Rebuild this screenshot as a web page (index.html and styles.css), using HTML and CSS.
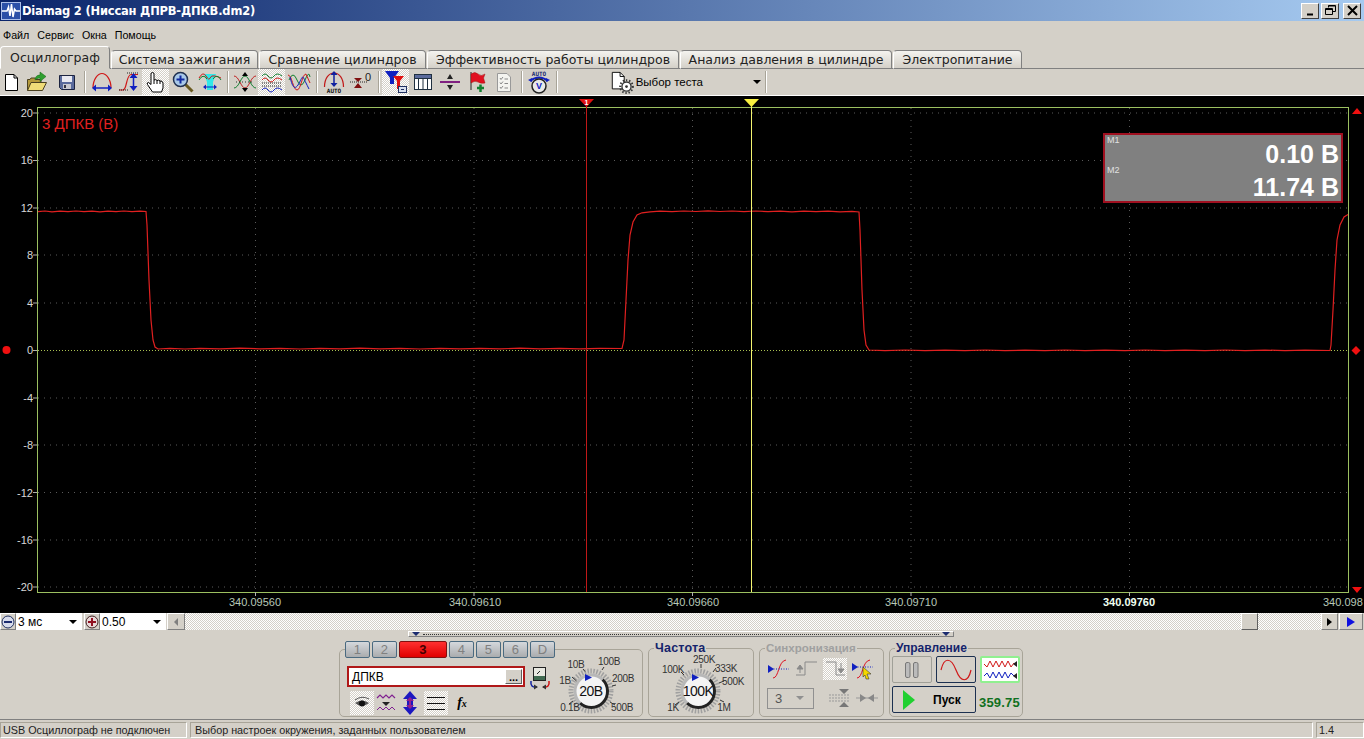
FILE: index.html
```html
<!DOCTYPE html>
<html>
    <head>
        <meta charset="UTF-8">
        <title>Diamag 2</title>
        <link rel="stylesheet" href="styles.css">
    </head>
    <body>
        <div class="titlebar">
            <svg class="app-icon" width="20" height="18" viewBox="0 0 20 18"><rect x="0.500" y="0.500" width="19" height="17" fill="#2b50a8" stroke="#a9bde8"/><path d="M1 9H6L7.500 5L9 14L10.500 2L12 15L13.500 7L15 9H19" stroke="#fff" stroke-width="1.500" fill="none"/></svg>
            <span class="title-text">Diamag 2 (Ниссан ДПРВ-ДПКВ.dm2)</span>
            <div class="win-buttons">
                <button class="win-btn"><svg width="11" height="11" viewBox="0 0 11 11"><path d="M2 9.500H8" stroke="#000" stroke-width="2"/></svg></button>
                <button class="win-btn"><svg width="11" height="11" viewBox="0 0 11 11"><path d="M3.500 2.500V0.500H10.500V6.500H8M0.500 3.500H7.500V9.500H0.500Z M3.500 1H10" stroke="#000" fill="none"/><path d="M1 4.500H7" stroke="#000"/></svg></button>
                <button class="win-btn close"><svg width="11" height="11" viewBox="0 0 11 11"><path d="M1 1L10 10M10 1L1 10" stroke="#000" stroke-width="2"/></svg></button>
            </div>
        </div>

        <div class="menubar">
            <span>Файл</span><span>Сервис</span><span>Окна</span><span>Помощь</span>
        </div>

        <div class="tabs">
            <div class="tab active">Осциллограф</div>
            <div class="tab tab-w1">Система зажигания</div>
            <div class="tab tab-w2">Сравнение цилиндров</div>
            <div class="tab tab-w3">Эффективность работы цилиндров</div>
            <div class="tab tab-w4">Анализ давления в цилиндре</div>
            <div class="tab tab-w5">Электропитание</div>
        </div>

        <div class="toolbar">
            <div class="tool"><svg width="24" height="22" viewBox="0 0 24 22"><path d="M6.500 3.500H15L18.500 7V19.500H6.500Z" fill="#fff" stroke="#000"/><path d="M15 3.500V7H18.500" fill="none" stroke="#000"/></svg></div>
            <div class="tool"><svg width="24" height="22" viewBox="0 0 24 22"><path d="M1.500 19.500V8.500H4L5 7H9L10 8.500H15V11" fill="#b59a3c" stroke="#4a4020"/><path d="M1.500 19.500L5 11.500H20.500L16.500 19.500Z" fill="#f0dc78" stroke="#4a4020"/><path d="M9 9C9 6 11 4 14 4V1L20 5.500L14 10.500V7C12 7 10 8 9 9Z" fill="#2fa030" stroke="#106010" stroke-width="0.500"/></svg></div>
            <div class="tool tool-save"><svg width="24" height="22" viewBox="0 0 24 22"><path d="M4.500 4.500H19.500V18.500H6.500L4.500 16.500Z" fill="#5a6a9c" stroke="#1c2340"/><rect x="7" y="5" width="10" height="6" fill="#e8e8f0"/><rect x="8" y="13" width="8" height="5" fill="#c8c8d0"/><rect x="9" y="14" width="2" height="3" fill="#334"/></svg></div>
            <div class="sep"></div>
            <div class="tool"><svg width="24" height="22" viewBox="0 0 24 22"><path d="M3 17C3 8 8 2.500 12 2.500S21 8 21 17" fill="none" stroke="#d01818" stroke-width="1.200"/><path d="M4 17H20" stroke="#1020c0" stroke-width="1.500"/><path d="M2 17L6 13.500V20.500ZM22 17L18 13.500V20.500Z" fill="#1020c0"/></svg></div>
            <div class="tool"><svg width="24" height="22" viewBox="0 0 24 22"><path d="M2 19H6C10 19 9 4 14 3.500H21" fill="none" stroke="#d01818" stroke-width="1.200"/><path d="M2 19H12M10 2H22" stroke="#222" stroke-dasharray="1 1"/><path d="M16.500 6V16" stroke="#1020c0" stroke-width="1.500"/><path d="M16.500 2L20.500 7H12.500ZM16.500 20L20.500 15H12.500Z" fill="#1020c0"/></svg></div>
            <div class="tool on"><svg width="24" height="24" viewBox="0 0 24 24"><path d="M8.500 22L3.500 14.500Q2.500 12.500 4.500 12.500L7 14.500V4Q7 2.500 8.500 2.500T10 4V10Q12 9 13 10.500Q15 9.500 16 11Q18.500 10.500 19 13V18L17.500 22Z" fill="#fff" stroke="#000"/><path d="M10 10V14M13 10.500V14M16 11V14" stroke="#000"/></svg></div>
            <div class="tool"><svg width="24" height="24" viewBox="0 0 24 24"><path d="M14 14L21.500 21.500" stroke="#6a5a20" stroke-width="3"/><circle cx="9.500" cy="9.500" r="7" fill="#a8c8e8" stroke="#203050" stroke-width="1.500"/><path d="M5.500 9.500H13.500M9.500 5.500V13.500" stroke="#1028a0" stroke-width="2"/></svg></div>
            <div class="tool"><svg width="24" height="24" viewBox="0 0 24 24"><path d="M6 4H18L15 12V20H9V12Z" fill="#30e8e8"/><path d="M1 8Q5 1 8 6T12 8T17 6T23 8" fill="none" stroke="#d01818"/><path d="M1 10Q5 3 9 9M15 9Q19 3 23 10" fill="none" stroke="#108030"/><path d="M6 17H18" stroke="#1020c0"/><path d="M5 17L8 14.500V19.500ZM19 17L16 14.500V19.500Z" fill="#1020c0"/></svg></div>
            <div class="sep"></div>
            <div class="tool"><svg width="24" height="22" viewBox="0 0 24 22"><path d="M1 5C6 5 8 17 12 17S18 5 23 5" fill="none" stroke="#c02020"/><path d="M1 17C6 17 8 5 12 5S18 17 23 17" fill="none" stroke="#108030"/><path d="M12 1L15 5H9ZM12 21L15 17H9Z" fill="#000"/><path d="M3 11H21" stroke="#333" stroke-dasharray="1 2"/></svg></div>
            <div class="tool on"><svg width="24" height="22" viewBox="0 0 24 22"><path d="M2 5Q5 1 8 5T14 5T22 5" fill="none" stroke="#108030"/><path d="M2 9Q5 5 8 9T14 9T22 9" fill="none" stroke="#d01818"/><path d="M2 12H22" stroke="#222" stroke-dasharray="1 1"/><path d="M2 15H22" stroke="#222" stroke-dasharray="1 1"/><path d="M2 19Q5 15 8 19T14 19T22 19" fill="none" stroke="#1020c0"/></svg></div>
            <div class="tool"><svg width="24" height="22" viewBox="0 0 24 22"><path d="M2 9Q6 -1 10 9T18 9T23 6" fill="none" stroke="#108030"/><path d="M1 4C5 4 6 19 10 19S15 3 19 3T23 12" fill="none" stroke="#d01818"/><path d="M3 6C5 14 7 20 11 14S15 2 18 10T22 18" fill="none" stroke="#1020c0"/></svg></div>
            <div class="sep"></div>
            <div class="tool"><svg width="24" height="24" viewBox="0 0 24 24"><path d="M2.500 17C2.500 8 7 3 12 3S21.500 8 21.500 17" fill="none" stroke="#c01818" stroke-width="1.200"/><path d="M12 4V14" stroke="#1020a0" stroke-width="1.500"/><path d="M12 1L15.500 5H8.500ZM12 17L15.500 13H8.500Z" fill="#1020a0"/><text class="tiny-bold" x="12" y="23">AUTO</text></svg></div>
            <div class="tool"><svg width="24" height="22" viewBox="0 0 24 22"><path d="M1 11H18" stroke="#222" stroke-dasharray="1 1"/><path d="M9 11L5 7H13ZM9 12L5 17H13Z" fill="#801010"/><text class="icon-zero" x="19" y="10">0</text></svg></div>
            <div class="sep"></div>
            <div class="tool on"><svg width="24" height="24" viewBox="0 0 24 24"><path d="M1 1H15L10 8V14H6V8Z" fill="#1020c0"/><path d="M9 6H20L16 11V19H13V11Z" fill="#e01010"/><rect x="14.500" y="16.500" width="8" height="6" fill="#d8e0f0" stroke="#203060"/><path d="M17 19.500H20" stroke="#203060"/></svg></div>
            <div class="tool"><svg width="24" height="22" viewBox="0 0 24 22"><rect x="3.500" y="3.500" width="17" height="15" fill="#fff" stroke="#203040"/><rect x="3.500" y="3.500" width="17" height="4" fill="#5a6a9c" stroke="#203040"/><path d="M7.500 7V18M12 7V18M16.500 7V18" stroke="#203040"/></svg></div>
            <div class="tool"><svg width="24" height="22" viewBox="0 0 24 22"><path d="M2 11H22" stroke="#802080" stroke-width="2"/><path d="M12 3L15 8H9ZM12 19L15 14H9Z" fill="#222"/></svg></div>
            <div class="tool"><svg width="24" height="24" viewBox="0 0 24 24"><path d="M6 2V20" stroke="#222"/><path d="M6 4Q10 1 13 4T20 4L18.500 8L20 13Q16 14 13 12T6 13Z" fill="#e01020" stroke="#a01010" stroke-width="0.500"/><path d="M15.500 14.500V22M12 18H19" stroke="#108030" stroke-width="2.500"/></svg></div>
            <div class="tool"><svg width="24" height="22" viewBox="0 0 24 22"><path d="M5.500 2.500H15L18.500 6V20.500H5.500Z" fill="#f4f4f0" stroke="#999"/><path d="M8 7L9 8.500L11 6M8 11.500L9 13L11 10.500M8 16L9 17.500L11 15M12.500 8H16M12.500 12.500H16M12.500 17H16" stroke="#888" fill="none"/></svg></div>
            <div class="sep"></div>
            <div class="tool"><svg width="24" height="24" viewBox="0 0 24 24"><text class="tiny-bold navy" x="12" y="6">AUTO</text><path d="M3 11Q12 4 21 11" fill="none" stroke="#1020c0" stroke-width="2"/><path d="M1 10L5 8V12ZM23 10L19 8V12Z" fill="#1020c0"/><circle cx="12" cy="16" r="7" fill="#e8e8e8" stroke="#222" stroke-width="1.500"/><text class="icon-v" x="12" y="19">V</text></svg></div>
            <div class="sep"></div>
            <div class="test-select">
                <svg width="28" height="26" viewBox="0 0 28 26"><path d="M2.500 2.500H11L15.500 7V20.500H2.500Z" fill="#fff" stroke="#000"/><path d="M11 2.500V7H15.500" fill="none" stroke="#000"/><circle cx="18" cy="18" r="5" fill="#fff" stroke="#333" stroke-width="1.500"/><circle cx="18" cy="18" r="7" fill="none" stroke="#333" stroke-width="2" stroke-dasharray="1.500 2"/><circle cx="18" cy="18" r="1.500" fill="#333"/></svg>
                <span class="test-label">Выбор теста</span>
                <i class="arrow-down"></i>
            </div>
            <div class="sep"></div>
        </div>

        <div class="scope">
            <svg class="scope-svg" width="1364" height="517" viewBox="0 96 1364 517">
                <g class="grid">
                    <path d="M38 113H1348M38 160.500H1348M38 208H1348M38 255H1348M38 303H1348M38 398H1348M38 445H1348M38 492.500H1348M38 540H1348M38 587H1348"/>
                    <path d="M255.500 108V592M474 108V592M692.500 108V592M911 108V592M1129.500 108V592"/>
                </g>
                <path class="zero-line" d="M38 350.500H1348"/>
                <rect class="plot-frame" x="37.500" y="107.500" width="1311" height="485"/>
                <path class="ticks" d="M33 113H37M33 160.500H37M33 208H37M33 255H37M33 303H37M33 350.500H37M33 398H37M33 445H37M33 492.500H37M33 540H37M33 587H37M255.500 592V596M474 592V596M692.500 592V596M911 592V596M1129.500 592V596"/>
                <g class="y-labels">
                    <text x="33" y="117">20</text>
                    <text x="33" y="164">16</text>
                    <text x="33" y="212">12</text>
                    <text x="33" y="259">8</text>
                    <text x="33" y="307">4</text>
                    <text x="33" y="354">0</text>
                    <text x="33" y="402">-4</text>
                    <text x="33" y="449">-8</text>
                    <text x="33" y="497">-12</text>
                    <text x="33" y="544">-16</text>
                    <text x="33" y="591">-20</text>
                </g>
                <g class="x-labels">
                    <text x="255" y="606">340.09560</text>
                    <text x="475" y="606">340.09610</text>
                    <text x="693" y="606">340.09660</text>
                    <text x="911" y="606">340.09710</text>
                    <text class="bright" x="1129" y="606">340.09760</text>
                    <text class="clip-right" x="1323" y="606">340.098</text>
                </g>
                <text class="channel-name" x="42" y="129">3 ДПКВ (В)</text>
                <path class="trace" d="M38 211.600L45 211L52 211.800L60 211.200L68 211.700L76 211L84 211.600L92 211.200L100 211.800L108 211.200L116 211.600L124 211L132 211.700L140 211.200L146 211.500L147 225L149 280L151 320L153 340L155 347L158 349L170 348.400L185 349L200 348.300L220 348.900L240 348.200L260 348.800L280 348.300L300 349L320 348.400L340 348.900L360 348.200L380 348.800L400 348.300L420 349L440 348.400L460 348.900L480 348.300L500 348.800L520 348.200L540 348.900L560 348.400L580 348.800L600 348.300L622 348.500L624 340L626 300L628 260L630 235L633 222L637 215L642 212.800L650 211.800L660 211.200L672 211.700L684 211L696 211.500L708 210.900L720 211.500L732 211L744 211.600L756 211L768 211.600L780 211.200L792 211.800L804 211.200L816 211.700L828 211.200L840 211.800L852 211.300L859 212L860 230L862 290L864 330L866 345L869 350L885 350.600L905 350L925 350.700L945 350.100L965 350.600L985 350L1005 350.700L1025 350.100L1045 350.600L1065 350L1085 350.700L1105 350.100L1125 350.600L1145 350L1165 350.700L1185 350.100L1205 350.600L1225 350L1245 350.700L1265 350.100L1285 350.600L1305 350.100L1330 350.500L1331 345L1333 310L1335 270L1337 240L1340 225L1344 217L1348 214.500"/>
                <path class="cursor-red" d="M586.500 104V592"/>
                <path class="cursor-yellow" d="M751.500 104V592"/>
                <path d="M579 99H594L586.500 107Z" fill="#e01010"/>
                <path d="M744 99H759L751.500 107Z" fill="#f8f040"/>
                <text class="cursor-num" x="586.500" y="105">1</text>
                <circle cx="6.500" cy="350" r="4" fill="#f01010"/>
                <path d="M1356 346L1360.500 350.500L1356 355L1351.500 350.500Z" fill="#f01010"/>
                <path d="M1352 114L1357 108L1362 114ZM1352 587L1357 593L1362 587Z" fill="#f01010"/>
            </svg>
            <div class="readout">
                <div class="readout-row"><span class="readout-tag">M1</span><span class="readout-value">0.10 В</span></div>
                <div class="readout-row"><span class="readout-tag second">M2</span><span class="readout-value">11.74 В</span></div>
            </div>
        </div>

        <div class="scrollrow">
            <button class="round-btn"><svg width="14" height="14" viewBox="0 0 14 14"><circle cx="7" cy="7" r="6" fill="#d8dcec" stroke="#203060"/><path d="M3 7H11" stroke="#1c2c70" stroke-width="2"/></svg></button>
            <div class="combo combo-first"><span>3 мс</span><i class="arrow-down"></i></div>
            <button class="round-btn"><svg width="14" height="14" viewBox="0 0 14 14"><circle cx="7" cy="7" r="6" fill="#e8d8d8" stroke="#402020"/><path d="M3 7H11M7 3V11" stroke="#901020" stroke-width="2"/></svg></button>
            <div class="combo"><span>0.50</span><i class="arrow-down"></i></div>
            <button class="scroll-btn"><i class="arrow-left"></i></button>
            <div class="scroll-track"><div class="scroll-thumb"></div></div>
            <button class="scroll-btn end"><i class="arrow-right"></i></button>
            <button class="scroll-btn wide"><i class="arrow-right blue"></i></button>
        </div>

        <div class="panel">
            <div class="range-slider"><i class="arrow-down navy"></i><span class="range-dots"></span><i class="arrow-down navy"></i></div>
            <div class="groups">
                <fieldset class="group group-channel">
                    <legend class="channel-tabs">
                        <span class="ch">1</span><span class="ch">2</span><span class="ch ch-on">3</span><span class="ch">4</span><span class="ch">5</span><span class="ch">6</span><span class="ch">D</span>
                    </legend>
                    <div class="channel-left">
                        <div class="channel-input-row">
                            <div class="channel-input"><span>ДПКВ</span><button class="dots-btn">...</button></div>
                            <svg width="22" height="24" viewBox="0 0 22 24"><rect x="4.500" y="1.500" width="12" height="13" fill="#e8e8e0" stroke="#222"/><rect x="5" y="10" width="11" height="4" fill="#406a50"/><path d="M8 8L11 5" stroke="#222"/><path d="M2 15Q1 22 8 21" fill="none" stroke="#1020a0" stroke-width="1.500"/><path d="M20 15Q21 22 14 21" fill="none" stroke="#d01010" stroke-width="1.500"/><path d="M9 21L5 18.500V23.500ZM13 21L17 18.500V23.500Z" fill="#333"/></svg>
                        </div>
                        <div class="channel-tools">
                            <div class="mini on"><svg width="20" height="14" viewBox="0 0 20 14"><path d="M3 4Q10 -1 17 3" fill="none" stroke="#555"/><path d="M3 7Q10 2 17 7Q10 13 3 7Z" fill="#555"/><circle cx="10" cy="7.500" r="3" fill="#111"/></svg></div>
                            <div class="mini"><svg width="20" height="22" viewBox="0 0 20 22"><path d="M1 6L4 3L7 6L10 3L13 6L16 3L19 6" fill="none" stroke="#802090" stroke-width="1.200"/><path d="M1 18L4 15L7 18L10 15L13 18L16 15L19 18" fill="none" stroke="#802090"/><path d="M6 10H14L10 14Z" fill="#222"/></svg></div>
                            <div class="mini"><svg width="20" height="24" viewBox="0 0 20 24"><path d="M10 0L17 8H13V16H17L10 24L3 16H7V8H3Z" fill="#1c18c0"/><path d="M10 6L14 10H11V14H14L10 18L6 14H9V10H6Z" fill="#902090"/></svg></div>
                            <div class="mini on lines"><svg width="18" height="16" viewBox="0 0 18 16"><path d="M0 2.500H18M0 8.500H18M0 14.500H18" stroke="#111"/></svg></div>
                            <div class="mini fx">f<sub>x</sub></div>
                        </div>
                    </div>
                    <svg class="knob" width="82" height="61" viewBox="560 655 82 61">
                        <circle class="knob-teeth" cx="593" cy="691" r="20"/>
                        <circle cx="593" cy="691" r="16" fill="#f4f4f4"/>
                        <path class="knob-dark" d="M604.500 679.500A16 16 0 0 1 582 703"/>
                        <path class="knob-light" d="M582 703A16 16 0 0 1 604.500 679.500"/>
                        <path class="knob-mark" d="M578.500 681L574 677M587 671.500L585 669M604 670L606 667M614 686L618 685M612 702L617 705M575 701L571 704"/>
                        <path d="M587 674L594 677.500L587 681Z" fill="#1020c0"/>
                        <text class="knob-label" x="578" y="668">10В</text>
                        <text class="knob-label" x="611" y="665">100В</text>
                        <text class="knob-label" x="567" y="684">1В</text>
                        <text class="knob-label" x="625" y="682">200В</text>
                        <text class="knob-label" x="572" y="711">0.1В</text>
                        <text class="knob-label" x="624" y="711">500В</text>
                        <text class="knob-value" x="593" y="696">20В</text>
                    </svg>
                </fieldset>

                <fieldset class="group group-freq">
                    <legend>Частота</legend>
                    <svg class="knob" width="104" height="61" viewBox="649 655 104 61">
                        <circle class="knob-teeth" cx="698" cy="691" r="20"/>
                        <circle cx="698" cy="691" r="16" fill="#f4f4f4"/>
                        <path class="knob-dark" d="M709.500 679.500A16 16 0 0 1 687 703"/>
                        <path class="knob-light" d="M687 703A16 16 0 0 1 709.500 679.500"/>
                        <path class="knob-mark" d="M684 675L681 672M701 668V664M713 672L716 668M719 683L724 681M720 700L724 702M679 702L675 705"/>
                        <path d="M692 674L699 677.500L692 681Z" fill="#1020c0"/>
                        <text class="knob-label" x="673" y="673">100K</text>
                        <text class="knob-label" x="704" y="663">250K</text>
                        <text class="knob-label" x="726" y="672">333K</text>
                        <text class="knob-label" x="733" y="685">500K</text>
                        <text class="knob-label" x="673" y="711">1K</text>
                        <text class="knob-label" x="724" y="711">1M</text>
                        <text class="knob-value" x="698" y="696">100K</text>
                    </svg>
                </fieldset>

                <fieldset class="group group-sync">
                    <legend>Синхронизация</legend>
                    <div class="sync-row">
                        <div class="sync-icon"><svg width="24" height="22" viewBox="0 0 24 22"><path d="M6 20C12 20 11 3 19 2" fill="none" stroke="#e01020"/><path d="M4 11H22" stroke="#1020c0" stroke-dasharray="1 1.500"/><path d="M1 7L7 11L1 15Z" fill="#1020c0"/></svg></div>
                        <div class="sync-icon"><svg width="24" height="22" viewBox="0 0 24 22"><path d="M1 17H10V4H22" fill="none" stroke="#8a8a8a"/><path d="M5 7L8 11H2ZM5 10V15" stroke="#8a8a8a" fill="#8a8a8a"/></svg></div>
                        <div class="sync-icon on"><svg width="24" height="22" viewBox="0 0 24 22"><path d="M3 4H13V17H22" fill="none" stroke="#8a8a8a"/><path d="M18 15L15 11H21ZM18 5V12" stroke="#8a8a8a" fill="#8a8a8a"/></svg></div>
                        <div class="sync-icon"><svg width="24" height="22" viewBox="0 0 24 22"><path d="M6 20C12 20 11 3 19 2" fill="none" stroke="#e01020"/><path d="M4 9H22" stroke="#1020c0" stroke-dasharray="1 1.500"/><path d="M1 5L7 9L1 13Z" fill="#1020c0"/><path d="M12 9L20 16L16 16L18 21L15 21L14 17L12 19Z" fill="#f4d800" stroke="#222" stroke-width="0.500"/></svg></div>
                    </div>
                    <div class="sync-row second">
                        <div class="sync-combo"><span>3</span><i class="arrow-down gray"></i></div>
                        <div class="sync-icon"><svg width="24" height="20" viewBox="0 0 24 20"><path d="M2 7H22M2 10H22M2 13H22" stroke="#999" stroke-dasharray="2 1"/><path d="M17 6L12 1H22ZM17 14L12 19H22Z" fill="#777"/></svg></div>
                        <div class="sync-icon"><svg width="24" height="20" viewBox="0 0 24 20"><path d="M1 10H23" stroke="#999"/><path d="M11 10L5 6V14ZM13 10L19 6V14Z" fill="#888"/></svg></div>
                    </div>
                </fieldset>

                <fieldset class="group group-ctrl">
                    <legend>Управление</legend>
                    <div class="ctrl-grid">
                        <button class="ctrl-btn"><svg width="16" height="20" viewBox="0 0 16 20"><rect x="1.500" y="2.500" width="4.500" height="15" rx="1.500" fill="#bbb" stroke="#777"/><rect x="9.500" y="2.500" width="4.500" height="15" rx="1.500" fill="#bbb" stroke="#777"/></svg></button>
                        <button class="ctrl-btn dark"><svg width="32" height="22" viewBox="0 0 32 22"><path d="M1 11C4 -2 11 -2 16 11S28 24 31 11" fill="none" stroke="#d01818" stroke-width="1.200"/></svg></button>
                        <button class="ctrl-btn green"><svg width="34" height="24" viewBox="0 0 34 24"><path d="M1 6L4 9L7 3L10 9L13 3L16 9L19 3L22 9L25 3L28 9L31 5" fill="none" stroke="#d01818"/><path d="M1 18L4 15L7 20L10 14L13 20L16 14L19 20L22 14L25 20L28 15L31 18" fill="none" stroke="#1020c0"/><path d="M34 3V9L30 6ZM34 15V21L30 18Z" fill="#222"/></svg></button>
                        <button class="ctrl-btn dark start"><svg width="14" height="22" viewBox="0 0 14 22"><path d="M1 1L13 11L1 21Z" fill="#20d030"/></svg><span>Пуск</span></button>
                        <div class="speed">359.75</div>
                    </div>
                </fieldset>
            </div>
        </div>

        <div class="statusbar">
            <div class="status status-a">USB Осциллограф не подключен</div>
            <div class="status status-b">Выбор настроек окружения, заданных пользователем</div>
            <div class="status status-c">1.4</div>
        </div>
    </body>
</html>
```

FILE: styles.css
```css
* {
    box-sizing: border-box;
}
html, body {
    margin: 0;
    padding: 0;
}
body {
    width: 1364px;
    height: 739px;
    overflow: hidden;
    display: flex;
    flex-direction: column;
    background: #d4d0c8;
    font-family: "Liberation Sans", Arial, sans-serif;
    font-size: 11px;
    color: #000;
}
button {
    padding: 0;
    margin: 0;
    font-family: inherit;
}

/* title bar */
.titlebar {
    height: 21px;
    display: flex;
    align-items: center;
    padding: 0 3px 0 1px;
    background: linear-gradient(to right, #0a246a, #a6caf0);
}
.app-icon {
    flex: none;
}
.title-text {
    margin-left: 1px;
    color: #fff;
    font-family: "DejaVu Sans", sans-serif;
    font-size: 11.500px;
    font-weight: bold;
    letter-spacing: -0.200px;
}
.win-buttons {
    margin-left: auto;
    display: flex;
    gap: 2px;
}
.win-btn {
    width: 18px;
    height: 16px;
    display: flex;
    align-items: center;
    justify-content: center;
    background: #d4d0c8;
    border: 1px solid;
    border-color: #fff #404040 #404040 #fff;
}
.win-btn.close {
    margin-left: 2px;
}

/* menu */
.menubar {
    height: 25px;
    display: flex;
    align-items: center;
    gap: 8px;
    padding: 3px 0 0 3px;
    font-family: "Liberation Sans", sans-serif;
    font-size: 10.700px;
}

/* tabs */
.tabs {
    height: 23px;
    display: flex;
    align-items: flex-end;
    gap: 1px;
    border-bottom: 1px solid #808080;
    font-family: "DejaVu Sans", sans-serif;
    font-size: 12.500px;
}
.tab {
    height: 19px;
    margin-bottom: -1px;
    display: flex;
    align-items: center;
    justify-content: center;
    border: 1px solid #808080;
    border-bottom: 1px solid #808080;
    border-left-color: #fff;
    border-radius: 4px 4px 0 0;
    background: linear-gradient(#f4f3ef, #d4d0c8);
    color: #222;
}
.tab.active {
    width: 110px;
    height: 23px;
    background: #d4d0c8;
    border-bottom-color: #d4d0c8;
    border-top-color: #fff;
}
.tab-w1 { width: 147px; }
.tab-w2 { width: 167px; }
.tab-w3 { width: 252px; }
.tab-w4 { width: 212px; }
.tab-w5 { width: 129px; }

/* toolbar */
.toolbar {
    height: 27px;
    display: flex;
    align-items: stretch;
    margin-left: -3px;
    border-bottom: 1px solid #fff;
}
.tool {
    width: 27px;
    display: flex;
    align-items: center;
    justify-content: center;
    flex: none;
}
.tool-save {
    margin-left: 2px;
}
.on {
    background: repeating-conic-gradient(#fff 0 25%, #d4d0c8 0 50%) 0 0 / 2px 2px;
}
.sep {
    width: 8px;
    flex: none;
    margin: 2px 0;
    background: linear-gradient(#a8a498, #a8a498) 4px 0 / 1px 100% no-repeat, linear-gradient(#fff, #fff) 5px 0 / 1px 100% no-repeat;
}
.test-select {
    width: 201px;
    flex: none;
    display: flex;
    align-items: center;
    padding-left: 50px;
}
.test-label {
    white-space: nowrap;
    font-size: 11.500px;
}
.test-select .arrow-down {
    margin-left: 50px;
}
.tiny-bold {
    font-family: "DejaVu Sans Mono", monospace;
    font-size: 6px;
    font-weight: bold;
    text-anchor: middle;
    fill: #111;
}
.tiny-bold.navy {
    fill: #1c2c70;
}
.icon-zero {
    font-family: "Liberation Sans", sans-serif;
    font-size: 11px;
    text-anchor: middle;
    fill: #222;
}
.icon-v {
    font-family: "Liberation Sans", sans-serif;
    font-size: 9px;
    font-weight: bold;
    text-anchor: middle;
    fill: #1020c0;
}

/* arrows */
.arrow-down {
    display: block;
    width: 0;
    height: 0;
    flex: none;
    border: 4px solid transparent;
    border-top: 4px solid #000;
    border-bottom: 0;
}
.arrow-down.navy {
    border-top-color: #1c2c70;
}
.arrow-down.gray {
    border-top-color: #909090;
}
.arrow-left {
    display: block;
    width: 0;
    height: 0;
    border: 4px solid transparent;
    border-right: 4px solid #808080;
    border-left: 0;
}
.arrow-right {
    display: block;
    width: 0;
    height: 0;
    border: 4px solid transparent;
    border-left: 5px solid #000;
    border-right: 0;
}
.arrow-right.blue {
    border-width: 5px 0 5px 8px;
    border-left-color: #1010e0;
}

/* scope */
.scope {
    height: 517px;
    position: relative;
    background: #000;
}
.scope-svg {
    display: block;
    font-family: "Liberation Sans", sans-serif;
}
.grid path {
    fill: none;
    stroke: #5a5a5a;
    stroke-dasharray: 1 5;
}
.zero-line {
    fill: none;
    stroke: #a8c050;
    stroke-dasharray: 1 2;
}
.plot-frame {
    fill: none;
    stroke: #9cc060;
}
.ticks {
    stroke: #b0b0b0;
    fill: none;
}
.y-labels text {
    font-size: 11px;
    fill: #d8d8d8;
    text-anchor: end;
}
.x-labels text {
    font-size: 11px;
    fill: #b8c8b8;
    text-anchor: middle;
}
.x-labels .bright {
    fill: #f0fff0;
    font-weight: bold;
}
.x-labels .clip-right {
    text-anchor: start;
}
.channel-name {
    font-size: 15px;
    fill: #e02020;
}
.trace {
    fill: none;
    stroke: #e02020;
    stroke-width: 1.200;
}
.cursor-red {
    stroke: #c01818;
    fill: none;
}
.cursor-yellow {
    stroke: #f4f470;
    fill: none;
}
.cursor-num {
    font-size: 7px;
    font-weight: bold;
    fill: #fff;
    text-anchor: middle;
}
.readout {
    position: absolute;
    left: 1103px;
    top: 37px;
    width: 240px;
    height: 70px;
    background: #808080;
    border: 2px solid #a01020;
    color: #fff;
}
.readout-row {
    height: 33px;
    position: relative;
    text-align: right;
    padding-right: 2px;
}
.readout-tag {
    position: absolute;
    left: 2px;
    top: 0;
    font-size: 9px;
    color: #e0e0e0;
}
.readout-tag.second {
    top: -3px;
}
.readout-value {
    font-size: 25px;
    font-weight: bold;
    line-height: 38px;
}

/* scroll row */
.scrollrow {
    height: 17px;
    display: flex;
    align-items: stretch;
    background: #d4d0c8;
}
.round-btn {
    width: 16px;
    display: flex;
    align-items: center;
    justify-content: center;
    flex: none;
    background: #d4d0c8;
    border: 1px solid;
    border-color: #fff #808080 #808080 #fff;
}
.combo {
    width: 66px;
    flex: none;
    display: flex;
    align-items: center;
    justify-content: space-between;
    padding: 0 5px 0 2px;
    background: #fff;
    font-size: 12px;
}
.combo-first {
    margin-right: 2px;
}
.scroll-btn {
    width: 18px;
    margin-left: 1px;
    flex: none;
    display: flex;
    align-items: center;
    justify-content: center;
    background: #d4d0c8;
    border: 1px solid;
    border-color: #fff #808080 #808080 #fff;
}
.scroll-btn.end {
    margin-left: 0;
    width: 17px;
}
.scroll-btn.wide {
    width: 24px;
    margin: 0 1px 0 1px;
}
.scroll-track {
    flex: 1;
    display: flex;
    justify-content: flex-end;
    padding-right: 63px;
    background: repeating-conic-gradient(#fff 0 25%, #d4d0c8 0 50%) 0 0 / 2px 2px;
}
.scroll-thumb {
    width: 17px;
    background: #d4d0c8;
    border: 1px solid;
    border-color: #fff #606060 #606060 #fff;
}

/* bottom panel */
.panel {
    flex: 1;
    padding: 1px 0 0 339px;
    border-bottom: 1px solid #808080;
}
.range-slider {
    width: 546px;
    height: 6px;
    margin-left: 69px;
    display: flex;
    align-items: center;
    gap: 3px;
    padding: 0 3px;
    border: 1px solid;
    border-color: #fff #808080 #808080 #fff;
}
.range-dots {
    flex: 1;
    border-top: 1px dotted #333;
}
.groups {
    margin-top: 4px;
    display: flex;
    align-items: flex-start;
    gap: 5px;
}
.group {
    height: 76px;
    margin: 0;
    min-width: 0;
    display: flex;
    border: 1px solid #a8a498;
    border-radius: 5px;
}
.group legend {
    height: 14px;
    margin: 0 0 -6px 5px;
    padding: 0 1px;
    line-height: 14px;
    font-size: 12.500px;
    font-weight: bold;
    letter-spacing: 0.200px;
    color: #14246c;
}
.group-channel {
    width: 304px;
    padding: 6px 0 0 7px;
}
.group-channel legend.channel-tabs {
    height: 17px;
    margin: 0 0 -9px -2px;
    padding: 0;
    display: flex;
    gap: 2px;
}
.ch {
    width: 25px;
    height: 17px;
    display: flex;
    align-items: center;
    justify-content: center;
    background: linear-gradient(#d4d8dc, #aaacae);
    border: 1px solid #4a6a80;
    border-radius: 2px;
    color: #808080;
    font-size: 13px;
    font-weight: normal;
}
.ch-on {
    width: 48px;
    background: linear-gradient(#ff3030, #e00000);
    border-color: #801010;
    color: #400;
    font-weight: bold;
}
.channel-left {
    width: 211px;
    flex: none;
    margin-top: 11px;
}
.channel-input-row {
    display: flex;
    gap: 4px;
}
.channel-input {
    width: 178px;
    height: 21px;
    display: flex;
    align-items: center;
    justify-content: space-between;
    padding: 0 1px 0 3px;
    background: #fff;
    border: 2px solid #b01818;
    font-size: 12px;
}
.dots-btn {
    width: 17px;
    height: 15px;
    background: #d4d0c8;
    border: 1px solid;
    border-color: #fff #606060 #606060 #fff;
    font-size: 11px;
    font-weight: bold;
    line-height: 8px;
}
.channel-tools {
    display: flex;
    margin-top: 1px;
    padding-left: 3px;
}
.mini {
    width: 24px;
    height: 24px;
    display: flex;
    align-items: center;
    justify-content: center;
    flex: none;
}
.mini.lines {
    margin-left: 2px;
}
.fx {
    margin-left: 2px;
    font-family: "Liberation Serif", serif;
    font-style: italic;
    font-weight: bold;
    font-size: 14px;
}
.fx sub {
    font-size: 10px;
}
.knob {
    display: block;
    flex: none;
}
.knob-teeth {
    fill: none;
    stroke: #a0a0a0;
    stroke-width: 5;
    stroke-dasharray: 1.500 1.500;
}
.knob-dark {
    fill: none;
    stroke: #222;
    stroke-width: 3;
}
.knob-light {
    fill: none;
    stroke: #b8b8b8;
    stroke-width: 3;
}
.knob-mark {
    stroke: #333;
    fill: none;
}
.knob-label {
    font-size: 10px;
    letter-spacing: -0.300px;
    fill: #333;
    text-anchor: middle;
}
.knob-value {
    font-size: 14px;
    letter-spacing: -0.500px;
    fill: #111;
    text-anchor: middle;
}
.group-freq {
    width: 106px;
    padding: 6px 0 0 0;
}
.group-sync {
    width: 125px;
    padding: 9px 0 0 7px;
    display: block;
}
.group-sync legend {
    margin-left: -2px;
    font-size: 11.500px;
    letter-spacing: 0;
    color: #a0a0a0;
}
.sync-row {
    display: flex;
    align-items: center;
    gap: 4px;
}
.sync-row.second {
    margin-top: 7px;
}
.sync-icon {
    width: 24px;
    height: 22px;
    display: flex;
    align-items: center;
    justify-content: center;
    flex: none;
}
.sync-combo {
    width: 47px;
    height: 21px;
    margin-right: 9px;
    display: flex;
    align-items: center;
    justify-content: space-between;
    padding: 0 9px 0 7px;
    border: 1px solid #909090;
    color: #555;
    font-size: 13px;
}
.group-ctrl {
    width: 134px;
    padding: 7px 0 0 2px;
    display: block;
}
.group-ctrl legend {
    margin-left: 3px;
    font-size: 12px;
    letter-spacing: 0;
}
.ctrl-grid {
    display: grid;
    grid-template-columns: 40px 40px 40px;
    grid-template-rows: 27px 27px;
    gap: 3px 4px;
}
.ctrl-btn {
    display: flex;
    align-items: center;
    justify-content: center;
    background: #d4d0c8;
    border: 1px solid #a0a098;
    border-radius: 2px;
}
.ctrl-btn.dark {
    border-color: #1c3050;
}
.ctrl-btn.green {
    background: #fff;
    border: 2px solid #90f090;
}
.ctrl-btn.start {
    grid-column: span 2;
    justify-content: flex-start;
    padding-left: 9px;
    font-size: 12px;
    font-weight: bold;
}
.ctrl-btn.start span {
    margin-left: 17px;
}
.speed {
    margin-left: -1px;
    align-self: end;
    color: #107020;
    font-size: 13px;
    font-weight: bold;
    letter-spacing: 0.200px;
    line-height: 20px;
    white-space: nowrap;
}

/* status bar */
.statusbar {
    height: 19px;
    display: flex;
    gap: 3px;
    padding-top: 2px;
    font-size: 10.800px;
    color: #222;
}
.status {
    height: 16px;
    display: flex;
    align-items: center;
    padding-left: 2px;
    border: 1px solid;
    border-color: #a8a498 #fff #fff #a8a498;
}
.status-a { width: 187px; }
.status-b { width: 1123px; padding-left: 4px; }
.status-c { flex: 1; }
```
